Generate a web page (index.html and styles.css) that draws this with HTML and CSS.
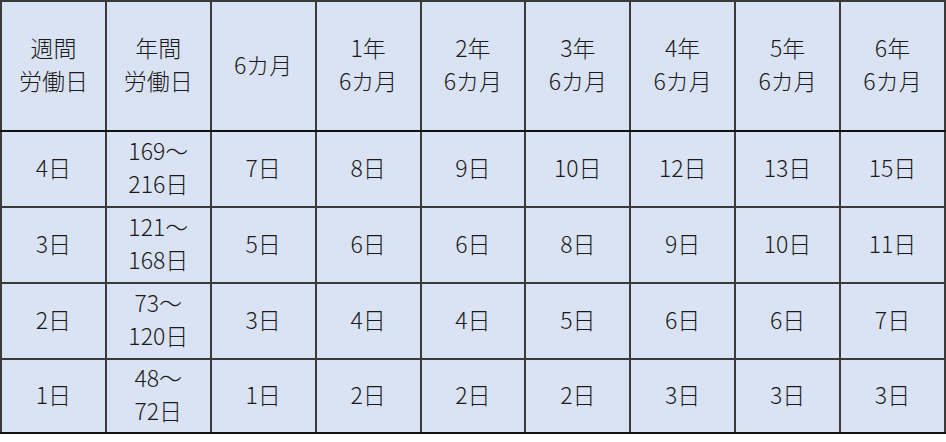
FILE: index.html
```html
<!DOCTYPE html>
<html lang="ja">
<head>
<meta charset="utf-8">
<link rel="stylesheet" href="styles.css">
</head>
<body>
<table class="leave">
  <thead>
    <tr class="head">
      <th>週間<br>労働日</th>
      <th>年間<br>労働日</th>
      <th>6カ月</th>
      <th>1年<br>6カ月</th>
      <th>2年<br>6カ月</th>
      <th>3年<br>6カ月</th>
      <th>4年<br>6カ月</th>
      <th>5年<br>6カ月</th>
      <th>6年<br>6カ月</th>
    </tr>
  </thead>
  <tbody>
    <tr class="row">
      <td>4日</td><td>169～<br>216日</td><td>7日</td><td>8日</td><td>9日</td><td>10日</td><td>12日</td><td>13日</td><td>15日</td>
    </tr>
    <tr class="row">
      <td>3日</td><td>121～<br>168日</td><td>5日</td><td>6日</td><td>6日</td><td>8日</td><td>9日</td><td>10日</td><td>11日</td>
    </tr>
    <tr class="row">
      <td>2日</td><td>73～<br>120日</td><td>3日</td><td>4日</td><td>4日</td><td>5日</td><td>6日</td><td>6日</td><td>7日</td>
    </tr>
    <tr class="row last">
      <td>1日</td><td>48～<br>72日</td><td>1日</td><td>2日</td><td>2日</td><td>2日</td><td>3日</td><td>3日</td><td>3日</td>
    </tr>
  </tbody>
</table>
</body>
</html>
```

FILE: styles.css
```css
html, body {
  margin: 0;
  padding: 0;
  background: #ffffff;
}

.leave {
  border-collapse: collapse;
  table-layout: fixed;
  width: 946px;
  font-family: "Noto Sans CJK JP", "Noto Sans", sans-serif;
  font-size: 23px;
  font-weight: 300;
  line-height: 33px;
  color: #1a1a1a;
  background: #dae3f3;
}

.leave th,
.leave td {
  border: 2px solid #3a3a3a;
  text-align: center;
  vertical-align: middle;
  padding: 0 0 4px 0;
  font-weight: 300;
}

.leave .head th {
  height: 124px;
  border-bottom-color: #111111;
}

.leave .row td {
  height: 70px;
}

.leave .row.last td {
  height: 68px;
  border-bottom-color: #111111;
}
```
